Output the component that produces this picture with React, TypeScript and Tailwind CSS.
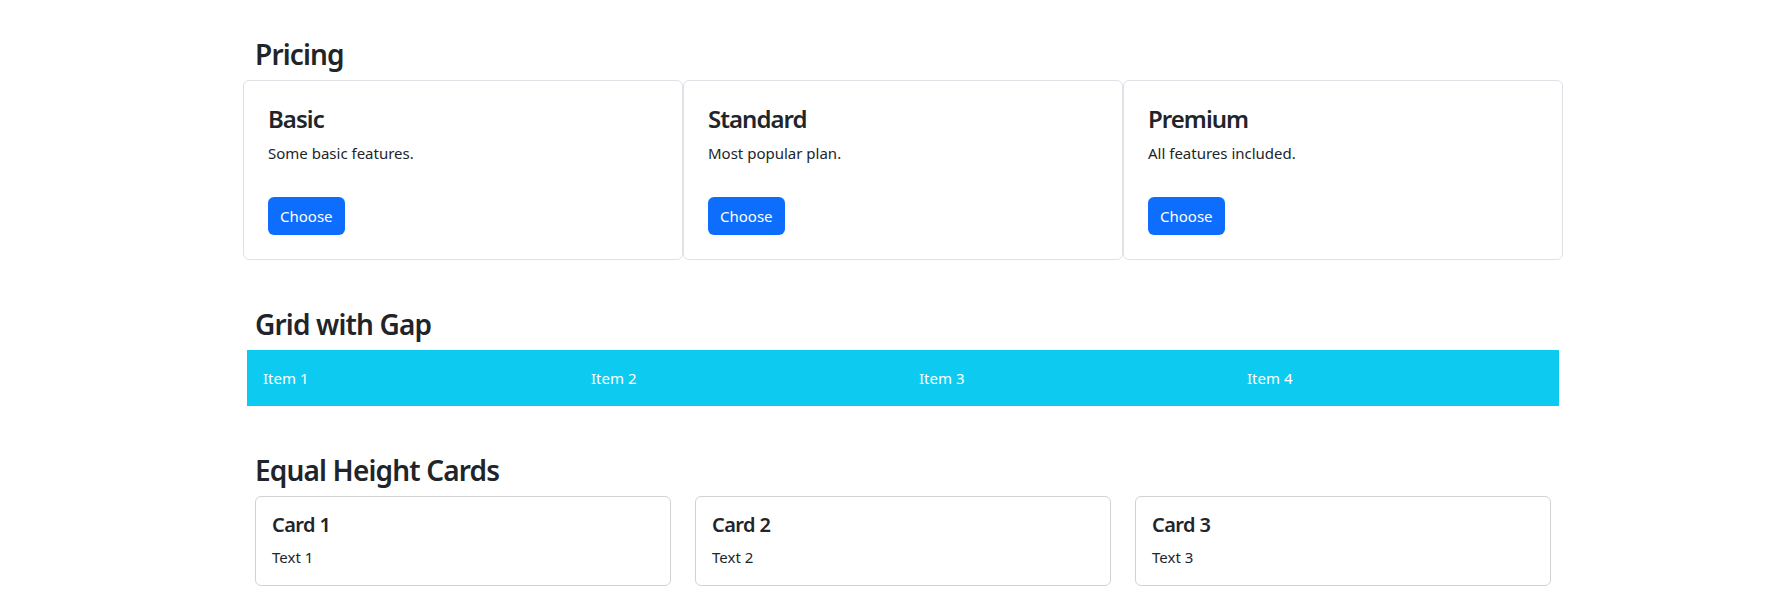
import React from 'react'

const plans = [
  { name: 'Basic', desc: 'Some basic features.' },
  { name: 'Standard', desc: 'Most popular plan.' },
  { name: 'Premium', desc: 'All features included.' },
]

const items = ['Item 1', 'Item 2', 'Item 3', 'Item 4']

const cards = [
  { title: 'Card 1', text: 'Text 1' },
  { title: 'Card 2', text: 'Text 2' },
  { title: 'Card 3', text: 'Text 3' },
]

export default function App() {
  return (
    <div
      className="min-h-screen bg-white pl-[14px] text-[#212529]"
      style={{ fontFamily: '"Noto Sans", "Open Sans", Arial, sans-serif' }}
    >
      <div className="mx-auto w-[1320px] px-3 pt-[38px] pb-6">
        {/* Pricing */}
        <h3 className="mb-2 text-[28px] font-semibold leading-[1.2] tracking-[-0.03em]">Pricing</h3>
        <div className="-mx-3 flex">
          {plans.map(p => (
            <div key={p.name} className="flex-1 rounded-md border border-[#dee2e6] bg-white p-6">
              <h4 className="mb-2 text-2xl font-semibold leading-[1.2] tracking-[-0.04em]">{p.name}</h4>
              <p className="mb-4 text-[15px] leading-6">{p.desc}</p>
              <button className="mt-4 h-[38px] rounded-md bg-[#0d6efd] px-3 text-[15px] leading-6 text-white">
                Choose
              </button>
            </div>
          ))}
        </div>

        {/* Grid with gap */}
        <h3 className="mt-12 mb-2 text-[28px] font-semibold leading-[1.2] tracking-[-0.03em]">Grid with Gap</h3>
        <div className="-mx-2 grid grid-cols-4 bg-[#0dcaf0] text-white">
          {items.map(i => (
            <div key={i} className="p-4 text-[15px] leading-6">{i}</div>
          ))}
        </div>

        {/* Equal height cards */}
        <h3 className="mt-12 mb-2 text-[28px] font-semibold leading-[1.2] tracking-[-0.03em]">Equal Height Cards</h3>
        <div className="grid grid-cols-3 gap-6">
          {cards.map(c => (
            <div key={c.title} className="rounded-md border border-[#d2d2d2] bg-white p-4">
              <h5 className="mb-2 text-xl font-semibold leading-[1.2] tracking-[-0.03em]">{c.title}</h5>
              <p className="text-[15px] leading-6">{c.text}</p>
            </div>
          ))}
        </div>
      </div>
    </div>
  )
}
